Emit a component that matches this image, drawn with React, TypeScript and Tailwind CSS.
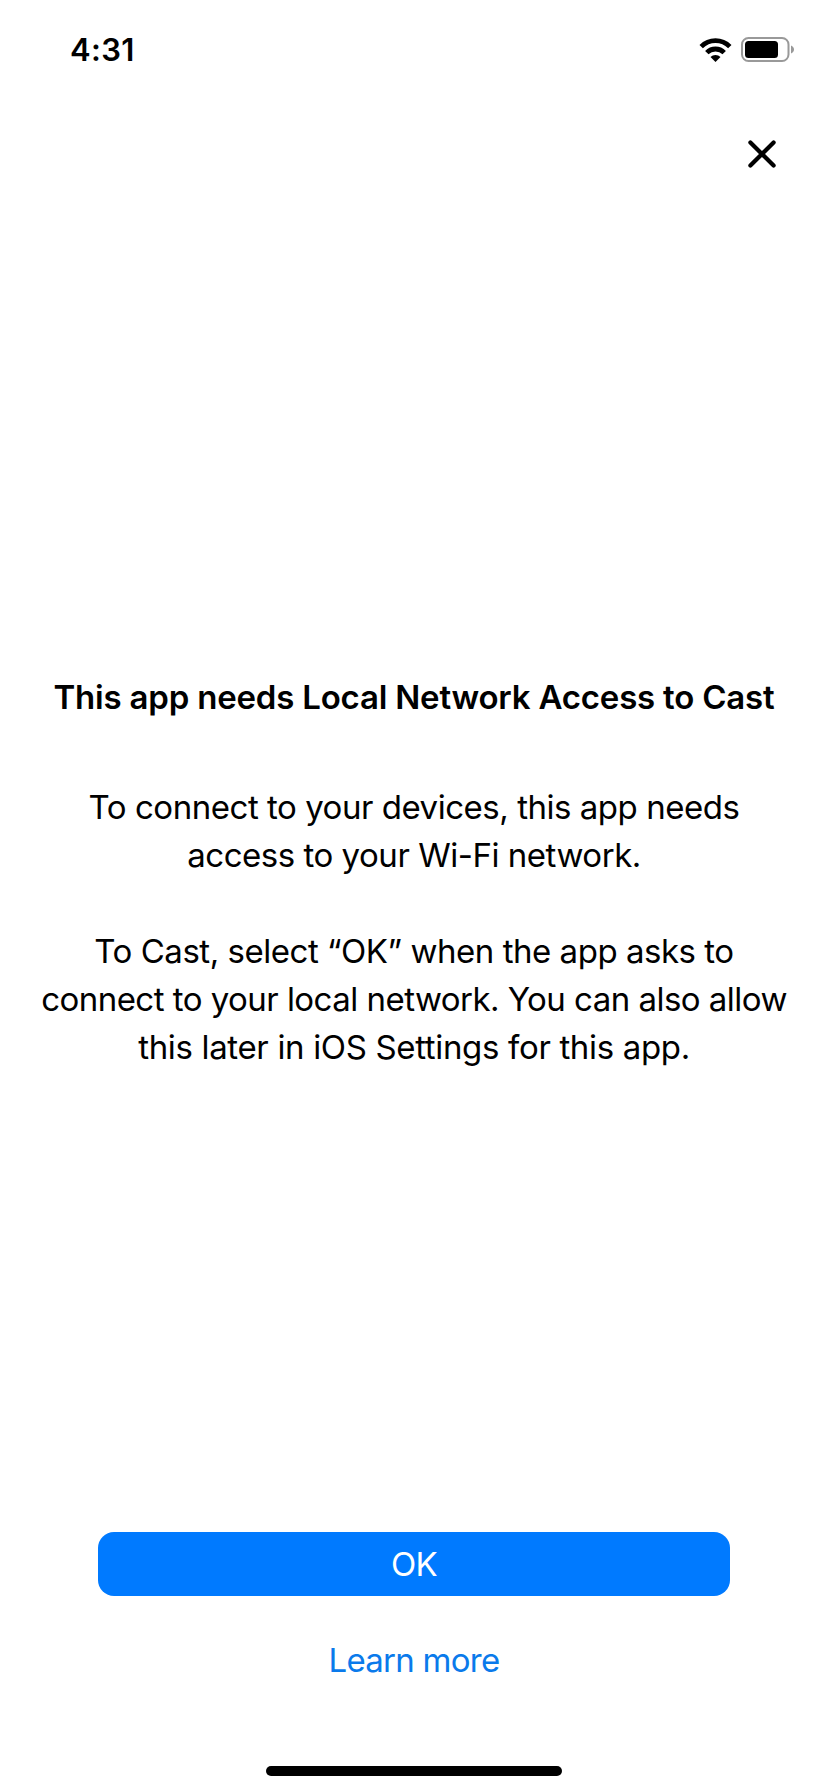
function StatusBar() {
  return (
    <header className="flex h-[99px] items-center justify-between pr-[34px] pl-[70px]">
      <span className="text-[31px] leading-[40px] font-semibold tracking-[0.3px]">4:31</span>
      <div className="flex items-center gap-[9px]">
        <svg width="33" height="24" viewBox="0 0 33 24" fill="none" stroke="#000" strokeWidth="4.8">
          <path d="M2.2 8.6a20.2 20.2 0 0 1 28.6 0" />
          <path d="M7.8 14.6a12.3 12.3 0 0 1 17.4 0" />
          <path d="M16.5 24l-5-5a7 7 0 0 1 10 0z" fill="#000" stroke="none" />
        </svg>
        <svg width="53" height="25" viewBox="0 0 53 25" fill="none">
          <rect x="1" y="1" width="46.5" height="23" rx="6.5" stroke="#999" strokeWidth="2" />
          <rect x="4" y="4" width="33" height="17" rx="3.5" fill="#000" />
          <path d="M50 8.5c4 1.4 4 6.6 0 8z" fill="#999" />
        </svg>
      </div>
    </header>
  );
}

export default function App() {
  return (
    <div className="flex h-[1792px] w-[828px] flex-col bg-white font-['Inter',sans-serif] text-black">
      <StatusBar />
      <div className="flex justify-end pt-[41px] pr-[52px]">
        <button aria-label="Close">
          <svg width="28" height="28" viewBox="0 0 28 28" stroke="#000" strokeWidth="4.2" strokeLinecap="round">
            <path d="M2.4 2.4l23.2 23.2M25.6 2.4L2.4 25.6" />
          </svg>
        </button>
      </div>

      <main className="flex flex-1 flex-col items-center pt-[505px] text-center text-[33px] leading-[48px] whitespace-nowrap">
        <h1 className="font-semibold tracking-[-0.2px]">This app needs Local Network Access to Cast</h1>
        <p className="mt-[62px] tracking-[-0.47px]">
          To connect to your devices, this app needs
          <br />
          access to your Wi-Fi network.
        </p>
        <p className="mt-12 tracking-[-0.47px]">
          To Cast, select “OK” when the app asks to
          <br />
          <span className="tracking-[-0.53px]">connect to your local network. You can also allow</span>
          <br />
          <span className="tracking-[-0.34px]">this later in iOS Settings for this app.</span>
        </p>
      </main>

      <footer className="flex flex-col items-center text-[33px] leading-[48px]">
        <button className="h-16 w-[632px] rounded-2xl bg-[#007aff] tracking-[-0.8px] text-white">OK</button>
        <a className="mt-10 tracking-[-0.75px] text-[#0a7aeb]">Learn more</a>
        <div className="mt-[82px] mb-4 h-[10px] w-[296px] rounded-full bg-black" />
      </footer>
    </div>
  );
}
